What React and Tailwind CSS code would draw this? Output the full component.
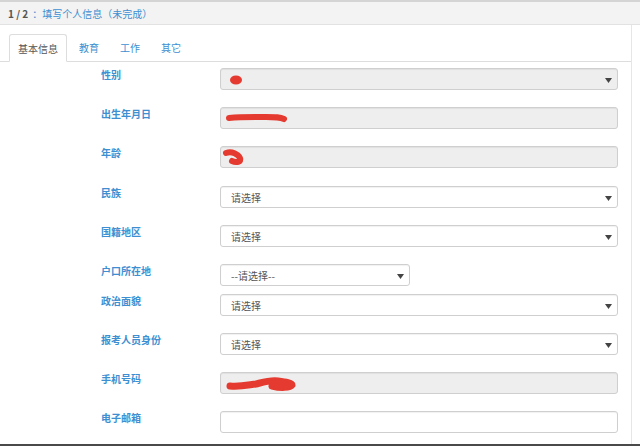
import React from "react";

const font = { fontFamily: '"Noto Sans CJK SC", "Noto Sans", sans-serif' };

function Arrow() {
  return (
    <svg width="7" height="5" viewBox="0 0 7 5" className="absolute right-[5px] top-[9px]">
      <path d="M0 0 L7 0 L3.5 5 Z" fill="#444" />
    </svg>
  );
}

function Scribble({ kind }) {
  if (kind === "dot")
    return (
      <svg width="16" height="12" viewBox="0 0 16 12" className="absolute left-[7px] top-[5px]">
        <ellipse cx="8" cy="6" rx="6" ry="4.5" fill="#e53a2f" />
      </svg>
    );
  if (kind === "line")
    return (
      <svg width="64" height="10" viewBox="0 0 64 10" className="absolute left-[5px] top-[5px]">
        <path d="M3 5 C 15 4, 30 4, 40 4 S 54 4, 58 6" stroke="#e53a2f" strokeWidth="6" strokeLinecap="round" fill="none" />
      </svg>
    );
  if (kind === "curl")
    return (
      <svg width="24" height="20" viewBox="0 0 24 20" className="absolute left-[1px] top-[1px]">
        <path d="M4 5 C 10 3, 16 6, 18 10 S 14 15, 10 13" stroke="#e53a2f" strokeWidth="6" strokeLinecap="round" fill="none" />
      </svg>
    );
  return (
    <svg width="72" height="16" viewBox="0 0 72 16" className="absolute left-[5px] top-[3px]">
      <path d="M4 10 C 14 11, 22 9, 30 8 C 38 6, 44 4, 52 5 C 60 6, 66 7, 66 9 C 64 12, 54 12, 46 10" stroke="#e53a2f" strokeWidth="7" strokeLinecap="round" fill="none" />
    </svg>
  );
}

function Field({ gray, select, placeholder, scribble, w = "w-[398px]" }) {
  return (
    <div
      className={`relative h-[22px] ${w} rounded-[3px] border border-[#cfcfcf] shadow-[inset_0_1px_1px_rgba(0,0,0,0.06)] ${
        gray ? "bg-[#eeeeee]" : "bg-white"
      } flex items-center pl-[10px] text-[10px] text-[#555]`}
    >
      {placeholder}
      {scribble && <Scribble kind={scribble} />}
      {select && <Arrow />}
    </div>
  );
}

function Row({ label, mt, children }) {
  return (
    <div className="flex items-start pl-[101px]" style={{ marginTop: mt }}>
      <div className="w-[119px] pt-[1px] text-[10px] leading-[12px] font-semibold text-[#3d8fd1]">{label}</div>
      {children}
    </div>
  );
}

export default function App() {
  return (
    <div className="w-[640px] h-[446px] overflow-hidden bg-white flex flex-col" style={font}>
      <div className="h-[25px] shrink-0 border-t-2 border-[#d4d4d4] bg-[#f3f3f3] border-b border-b-[#e2e2e2] flex items-center pl-[8px] text-[10px]">
        <span className="font-bold text-[#555]">1 / 2</span>
        <span className="text-[#3d8fd1] ml-[4px]">：填写个人信息（未完成）</span>
      </div>
      <div className="flex-1 w-[632px] border-r border-[#e6e6e6]">
        <div className="flex items-end pl-[9px] h-[37px] border-b border-[#dddddd] text-[10px]">
          <div className="h-[28px] -mb-px px-[8px] flex items-center border border-[#dddddd] border-b-white bg-white rounded-t-[3px] text-[#555]">
            基本信息
          </div>
          <div className="h-[28px] flex items-center px-[12px] text-[#3d8fd1]">教育</div>
          <div className="h-[28px] flex items-center px-[9px] text-[#3d8fd1]">工作</div>
          <div className="h-[28px] flex items-center px-[12px] text-[#3d8fd1]">其它</div>
        </div>
        <Row label="性别" mt={6}>
          <Field gray select scribble="dot" />
        </Row>
        <Row label="出生年月日" mt={17}>
          <Field gray scribble="line" />
        </Row>
        <Row label="年龄" mt={17}>
          <Field gray scribble="curl" />
        </Row>
        <Row label="民族" mt={18}>
          <Field select placeholder="请选择" />
        </Row>
        <Row label="国籍地区" mt={17}>
          <Field select placeholder="请选择" />
        </Row>
        <Row label="户口所在地" mt={17}>
          <Field select placeholder="--请选择--" w="w-[190px]" />
        </Row>
        <Row label="政治面貌" mt={8}>
          <Field select placeholder="请选择" />
        </Row>
        <Row label="报考人员身份" mt={17}>
          <Field select placeholder="请选择" />
        </Row>
        <Row label="手机号码" mt={17}>
          <Field gray scribble="phone" />
        </Row>
        <Row label="电子邮箱" mt={17}>
          <Field />
        </Row>
      </div>
      <div className="h-[2px] shrink-0 bg-[#4a4a4a]" />
    </div>
  );
}
